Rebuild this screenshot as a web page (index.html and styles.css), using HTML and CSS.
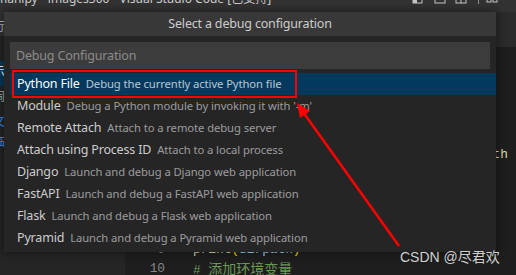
FILE: index.html
```html
<!DOCTYPE html>
<html lang="zh-CN">
<head>
    <meta charset="UTF-8">
    <title>Select a debug configuration</title>
    <link rel="stylesheet" href="styles.css">
</head>
<body>
    <div class="titlebar">
        <span class="title">manipy - images300 - Visual Studio Code [已支持]</span>
        <svg class="layout-icons" width="96" height="12" viewBox="0 0 96 12">
            <rect x="1" y="-6" width="9" height="9" fill="none" stroke="#c5c5c5"/>
            <rect x="1" y="-6" width="4" height="9" fill="#c5c5c5"/>
            <rect x="23" y="-6" width="10" height="9" fill="none" stroke="#c5c5c5"/>
            <rect x="44" y="-6" width="10" height="9" fill="none" stroke="#c5c5c5"/>
            <line x1="49" y1="-6" x2="49" y2="3" stroke="#c5c5c5"/>
            <line x1="66.5" y1="-4" x2="66.5" y2="4" stroke="#8a8a8a"/>
            <rect x="75" y="-6" width="4" height="8" fill="none" stroke="#c5c5c5"/>
            <rect x="81" y="-6" width="4" height="8" fill="none" stroke="#c5c5c5"/>
        </svg>
    </div>

    <div class="workbench">
        <aside class="sidebar">
            <div class="side-head"><span class="side-char">行</span></div>
            <div class="side-row"></div>
            <div class="side-row active"><span class="side-char light">示</span></div>
            <div class="side-row"><span class="side-char">闹</span></div>
            <div class="side-row short"><span class="side-char blue">文</span></div>
            <div class="side-row"><span class="side-char blue">临</span></div>
        </aside>
        <main class="editor">
            <div class="tabs"></div>
            <div class="code">
                <div class="line"><span class="ln">1</span><span class="src"><span class="kw">import</span> os</span></div>
                <div class="line"><span class="ln">2</span><span class="src"><span class="kw">import</span> sys</span></div>
                <div class="line"><span class="ln">3</span><span class="src"></span></div>
                <div class="line"><span class="ln">4</span><span class="src">        sys.path.<span class="fn">insert</span>(0,os.path.<span class="fn">abspath</span></span></div>
                <div class="line"><span class="ln">5</span><span class="src"></span></div>
                <div class="line"><span class="ln">6</span><span class="src"><span class="var">dirpath</span> = os.<span class="fn">getcwd</span>()</span></div>
                <div class="line"><span class="ln">7</span><span class="src"></span></div>
                <div class="line"><span class="ln">8</span><span class="src"></span></div>
                <div class="line"><span class="ln">9</span><span class="src"><span class="fn">print</span><span class="br">(</span><span class="var">dirpath</span><span class="br">)</span></span></div>
                <div class="line"><span class="ln">10</span><span class="src comment"># <span class="cjk">添加环境变量</span></span></div>
            </div>
        </main>
    </div>

    <div class="quick-input">
        <div class="qi-title">Select a debug configuration</div>
        <div class="qi-box">Debug Configuration</div>
        <ul class="qi-list">
            <li class="qi-row selected"><span class="label">Python File</span><span class="desc">Debug the currently active Python file</span></li>
            <li class="qi-row"><span class="label">Module</span><span class="desc">Debug a Python module by invoking it with '-m'</span></li>
            <li class="qi-row"><span class="label">Remote Attach</span><span class="desc">Attach to a remote debug server</span></li>
            <li class="qi-row"><span class="label">Attach using Process ID</span><span class="desc">Attach to a local process</span></li>
            <li class="qi-row"><span class="label">Django</span><span class="desc">Launch and debug a Django web application</span></li>
            <li class="qi-row"><span class="label">FastAPI</span><span class="desc">Launch and debug a FastAPI web application</span></li>
            <li class="qi-row"><span class="label">Flask</span><span class="desc">Launch and debug a Flask web application</span></li>
            <li class="qi-row"><span class="label">Pyramid</span><span class="desc">Launch and debug a Pyramid web application</span></li>
        </ul>
    </div>

    <div class="mark-box"></div>
    <svg class="arrow" width="516" height="275" viewBox="0 0 516 275">
        <line x1="399" y1="246" x2="303" y2="112" stroke="#ff0000" stroke-width="2.5"/>
        <polygon points="297,103 310,111 300,118" fill="#ff0000"/>
    </svg>
    <div class="watermark">CSDN @尽君欢</div>
</body>
</html>
```

FILE: styles.css
```css
* {
    margin: 0;
    padding: 0;
    box-sizing: border-box;
}

body {
    position: relative;
    width: 516px;
    height: 275px;
    overflow: hidden;
    background-color: #1e1e1e;
    font-family: 'Noto Sans', 'Noto Sans CJK SC', sans-serif;
    color: #cccccc;
}

/* title bar, mostly cut off at the top */
.titlebar {
    height: 12px;
    background-color: #323233;
    overflow: hidden;
    display: flex;
    justify-content: space-between;
    font-size: 12px;
}

.title {
    line-height: 12px;
    margin-top: -7px;
    margin-left: -4px;
    white-space: nowrap;
    color: #cccccc;
}

.layout-icons {
    margin-right: 8px;
}

.workbench {
    display: flex;
    height: 263px;
}

.sidebar {
    width: 125px;
    background-color: #252526;
    font-size: 12px;
}

.side-head {
    height: 24px;
    background-color: #333333;
    padding-top: 8px;
}

.side-row {
    height: 25px;
    padding-top: 4px;
}

.side-row.short {
    height: 20px;
}

.side-row.active {
    background-color: #04395e;
}

.side-char {
    display: block;
    margin-left: -7px;
    line-height: 14px;
    color: #bbbbbb;
}

.side-char.light {
    color: #ffffff;
}

.side-char.blue {
    color: #3794ff;
}

.editor {
    flex: 1;
    background-color: #1e1e1e;
}

.tabs {
    height: 35px;
    background-color: #2b2b2b;
}

.code {
    padding-top: 41px;
    font-family: 'Liberation Mono', monospace;
    font-size: 12.8px;
}

.line {
    display: flex;
    height: 19px;
    line-height: 19px;
    white-space: pre;
    color: #d4d4d4;
}

.ln {
    width: 40px;
    margin-right: 28px;
    text-align: right;
    color: #858585;
}

.kw { color: #c586c0; }
.fn { color: #dcdcaa; }
.var { color: #9cdcfe; }
.br { color: #ffd700; }
.comment { color: #6a9955; }

.cjk {
    font-family: 'Noto Sans CJK SC', sans-serif;
    font-size: 14px;
}

/* quick pick */
.quick-input {
    position: absolute;
    left: 4px;
    top: 12px;
    width: 492px;
    height: 240px;
    background-color: #252526;
    box-shadow: 0 0 8px 2px rgba(0, 0, 0, 0.36);
    font-size: 12.5px;
    letter-spacing: -0.18px;
}

.qi-title {
    height: 24px;
    line-height: 24px;
    text-align: center;
    background-color: #383838;
    color: #cccccc;
}

.qi-box {
    margin: 6px 6px 0 6px;
    height: 27px;
    line-height: 27px;
    padding-left: 6px;
    background-color: #3c3c3c;
    color: #8b8b8b;
}

.qi-list {
    list-style: none;
    margin-top: 4px;
    margin-left: 6px;
}

.qi-row {
    height: 22px;
    line-height: 22px;
    padding-left: 7px;
    white-space: nowrap;
    color: #cccccc;
}

.qi-row .desc {
    margin-left: 6px;
    font-size: 0.9em;
    letter-spacing: -0.08px;
    opacity: 0.7;
}

.qi-row.selected {
    background-color: #04395e;
    color: #ffffff;
}

/* annotations */
.mark-box {
    position: absolute;
    left: 12px;
    top: 70px;
    width: 285px;
    height: 28px;
    border: 2px solid #ff0000;
}

.arrow {
    position: absolute;
    left: 0;
    top: 0;
}

.watermark {
    position: absolute;
    left: 400px;
    top: 246px;
    font-family: 'Liberation Sans', 'Noto Sans CJK SC', sans-serif;
    font-size: 14px;
    color: #cfcfcf;
}
```
